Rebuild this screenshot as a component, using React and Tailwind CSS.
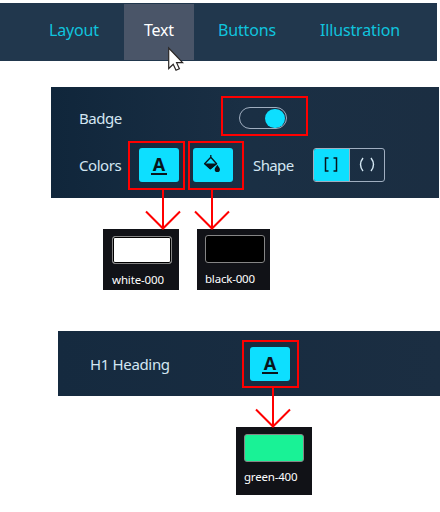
const tabs = [
  { name: 'Layout', box: 'w-[74px] ml-[50px]', label: '-ml-px tracking-[-0.15px] text-[#10c4de]' },
  { name: 'Text', box: 'w-[70px] pl-[20px] bg-[#4a5568]', label: 'tracking-[-0.2px] text-white' },
  { name: 'Buttons', box: 'w-[102px] pl-[24px]', label: 'tracking-[-0.15px] text-[#10c4de]' },
  { name: 'Illustration', box: 'w-[141px] pl-[24px]', label: 'tracking-[-0.15px] text-[#10c4de]' },
];

function TextColorButton() {
  return (
    <div className="flex h-[34px] w-[40px] shrink-0 items-center justify-center rounded-[3px] bg-[#0ddfff]">
      <div className="flex w-[16px] flex-col items-center border-b-2 border-[#09151c] pb-px text-[18px] leading-[16px] font-bold text-[#09151c]">
        A
      </div>
    </div>
  );
}

function FillColorButton() {
  return (
    <div className="flex h-[34px] w-[40px] shrink-0 rounded-[3px] bg-[#0ddfff]">
      <svg width="40" height="34" viewBox="0 0 40 34">
        <path d="M17.800 7v3.500M17.800 9.200l-6.200 6.500 5.700 5 6.300-5z" fill="none" stroke="#09151c" strokeWidth="1.300" strokeLinejoin="round" />
        <path d="M11.200 15.500h12.800l-6.700 6z" fill="#09151c" />
        <path d="M24.300 16.800c1 1.800 2.600 3.200 2.600 4.600a2.600 2.600 0 0 1-5.200 0c0-1.400 1.600-2.800 2.600-4.600z" fill="#09151c" />
      </svg>
    </div>
  );
}

function Swatch({ name, card, color, label }) {
  return (
    <div className={`flex shrink-0 flex-col bg-[#111217] ${card}`}>
      <div className={`h-[28px] w-[60px] rounded-[3px] border border-[#858585] p-px ${color}`} />
      <div className={`whitespace-nowrap text-[11.5px] leading-[16px] text-white ${label}`}>{name}</div>
    </div>
  );
}

function Annotations() {
  return (
    <svg className="absolute top-0 left-0" width="440" height="512" viewBox="0 0 440 512" fill="none">
      <g stroke="#ff0000" strokeWidth="2">
        <rect x="222" y="97" width="85" height="38" />
        <rect x="129" y="142" width="55" height="47" />
        <rect x="189" y="142" width="54" height="47" />
        <rect x="243" y="341" width="55" height="46" />
        <path d="M163 190v38M146 211.500l17 17 17-17" />
        <path d="M212 190v38M195 211.500l17 17 17-17" />
        <path d="M273 388v38M256 409.500l17 17 17-17" />
      </g>
      <path d="M168.700 48v20.500l4.500-4.300 2.800 6 3.400-1.500-2.800-6h6z" fill="#fff" stroke="#292524" strokeWidth="1.200" />
    </svg>
  );
}

export default function App() {
  return (
    <div className="relative h-[512px] w-[440px] overflow-hidden bg-white pt-[3px] font-['Noto_Sans','Open_Sans',sans-serif]">
      <nav className="flex h-[58px] w-[437px] bg-[#21374d] py-px">
        {tabs.map((t) => (
          <div key={t.name} className={`flex shrink-0 items-center whitespace-nowrap text-[16px] ${t.box}`}>
            <span className={`-mt-[4px] ${t.label}`}>{t.name}</span>
          </div>
        ))}
      </nav>

      <section className="mt-[26px] ml-[51px] h-[111px] w-[388px] bg-linear-to-r from-[#10263b] via-[#1a2f44] to-[#1b2e42] pl-[28px] text-[15px] text-[#d3e6f2]">
        <div className="flex h-[61px] pt-[20px]">
          <span className="w-[160px] leading-[22px] tracking-[-0.45px]">Badge</span>
          <div className="flex h-[22px] w-[48px] items-center justify-end rounded-full border border-[#a0aec0] pr-[1px]">
            <div className="h-[19px] w-[20px] rounded-full bg-[#0ddfff]" />
          </div>
        </div>
        <div className="flex h-[34px] items-center">
          <span className="w-[60px] tracking-[-0.45px]">Colors</span>
          <TextColorButton />
          <div className="w-[14px]" />
          <FillColorButton />
          <span className="ml-[20px] w-[60px] tracking-[-0.6px]">Shape</span>
          <div className="flex h-[34px] w-[72px] overflow-hidden rounded-[3px] border border-[#a0aec0]">
            <div className="-m-px flex w-[37px] items-center justify-center border-r border-[#a0aec0] bg-[#0ddfff]">
              <svg className="-mt-[3px]" width="14" height="16" viewBox="0 0 14 16" fill="none" stroke="#09151c" strokeWidth="1.500">
                <path d="M4.500 2H1.500v13h3M9.500 2h3v13h-3" />
              </svg>
            </div>
            <div className="flex flex-1 items-center justify-center">
              <svg className="-mt-[3px]" width="16" height="16" viewBox="0 0 16 16" fill="none" stroke="#d3e6f2" strokeWidth="1.400">
                <path d="M4 2q-5 6.500 0 13M12 2q5 6.500 0 13" />
              </svg>
            </div>
          </div>
        </div>
      </section>

      <div className="mt-[31px] ml-[103px] flex gap-[18px]">
        <Swatch name="white-000" card="h-[61px] w-[76px] pl-[9px] pt-[7px]" color="bg-white ring-1 ring-inset ring-black" label="mt-[8px] tracking-[-0.15px]" />
        <Swatch name="black-000" card="h-[61px] w-[73px] pl-[8px] pt-[6px]" color="bg-black" label="mt-[8px] tracking-[-0.2px]" />
      </div>

      <section className="mt-[41px] ml-[58px] flex h-[65px] w-[382px] bg-linear-to-r from-[#152a3f] to-[#1b2e42] pt-[16px] pl-[32px] text-[15px] text-[#d3e6f2]">
        <span className="w-[160px] leading-[34px] tracking-[-0.35px]">H1 Heading</span>
        <TextColorButton />
      </section>

      <div className="mt-[31px] ml-[236px] flex">
        <Swatch name="green-400" card="h-[68px] w-[76px] pl-[8px] pt-[7px]" color="bg-[#19f296]" label="mt-[7px] tracking-[-0.2px]" />
      </div>

      <Annotations />
    </div>
  );
}
